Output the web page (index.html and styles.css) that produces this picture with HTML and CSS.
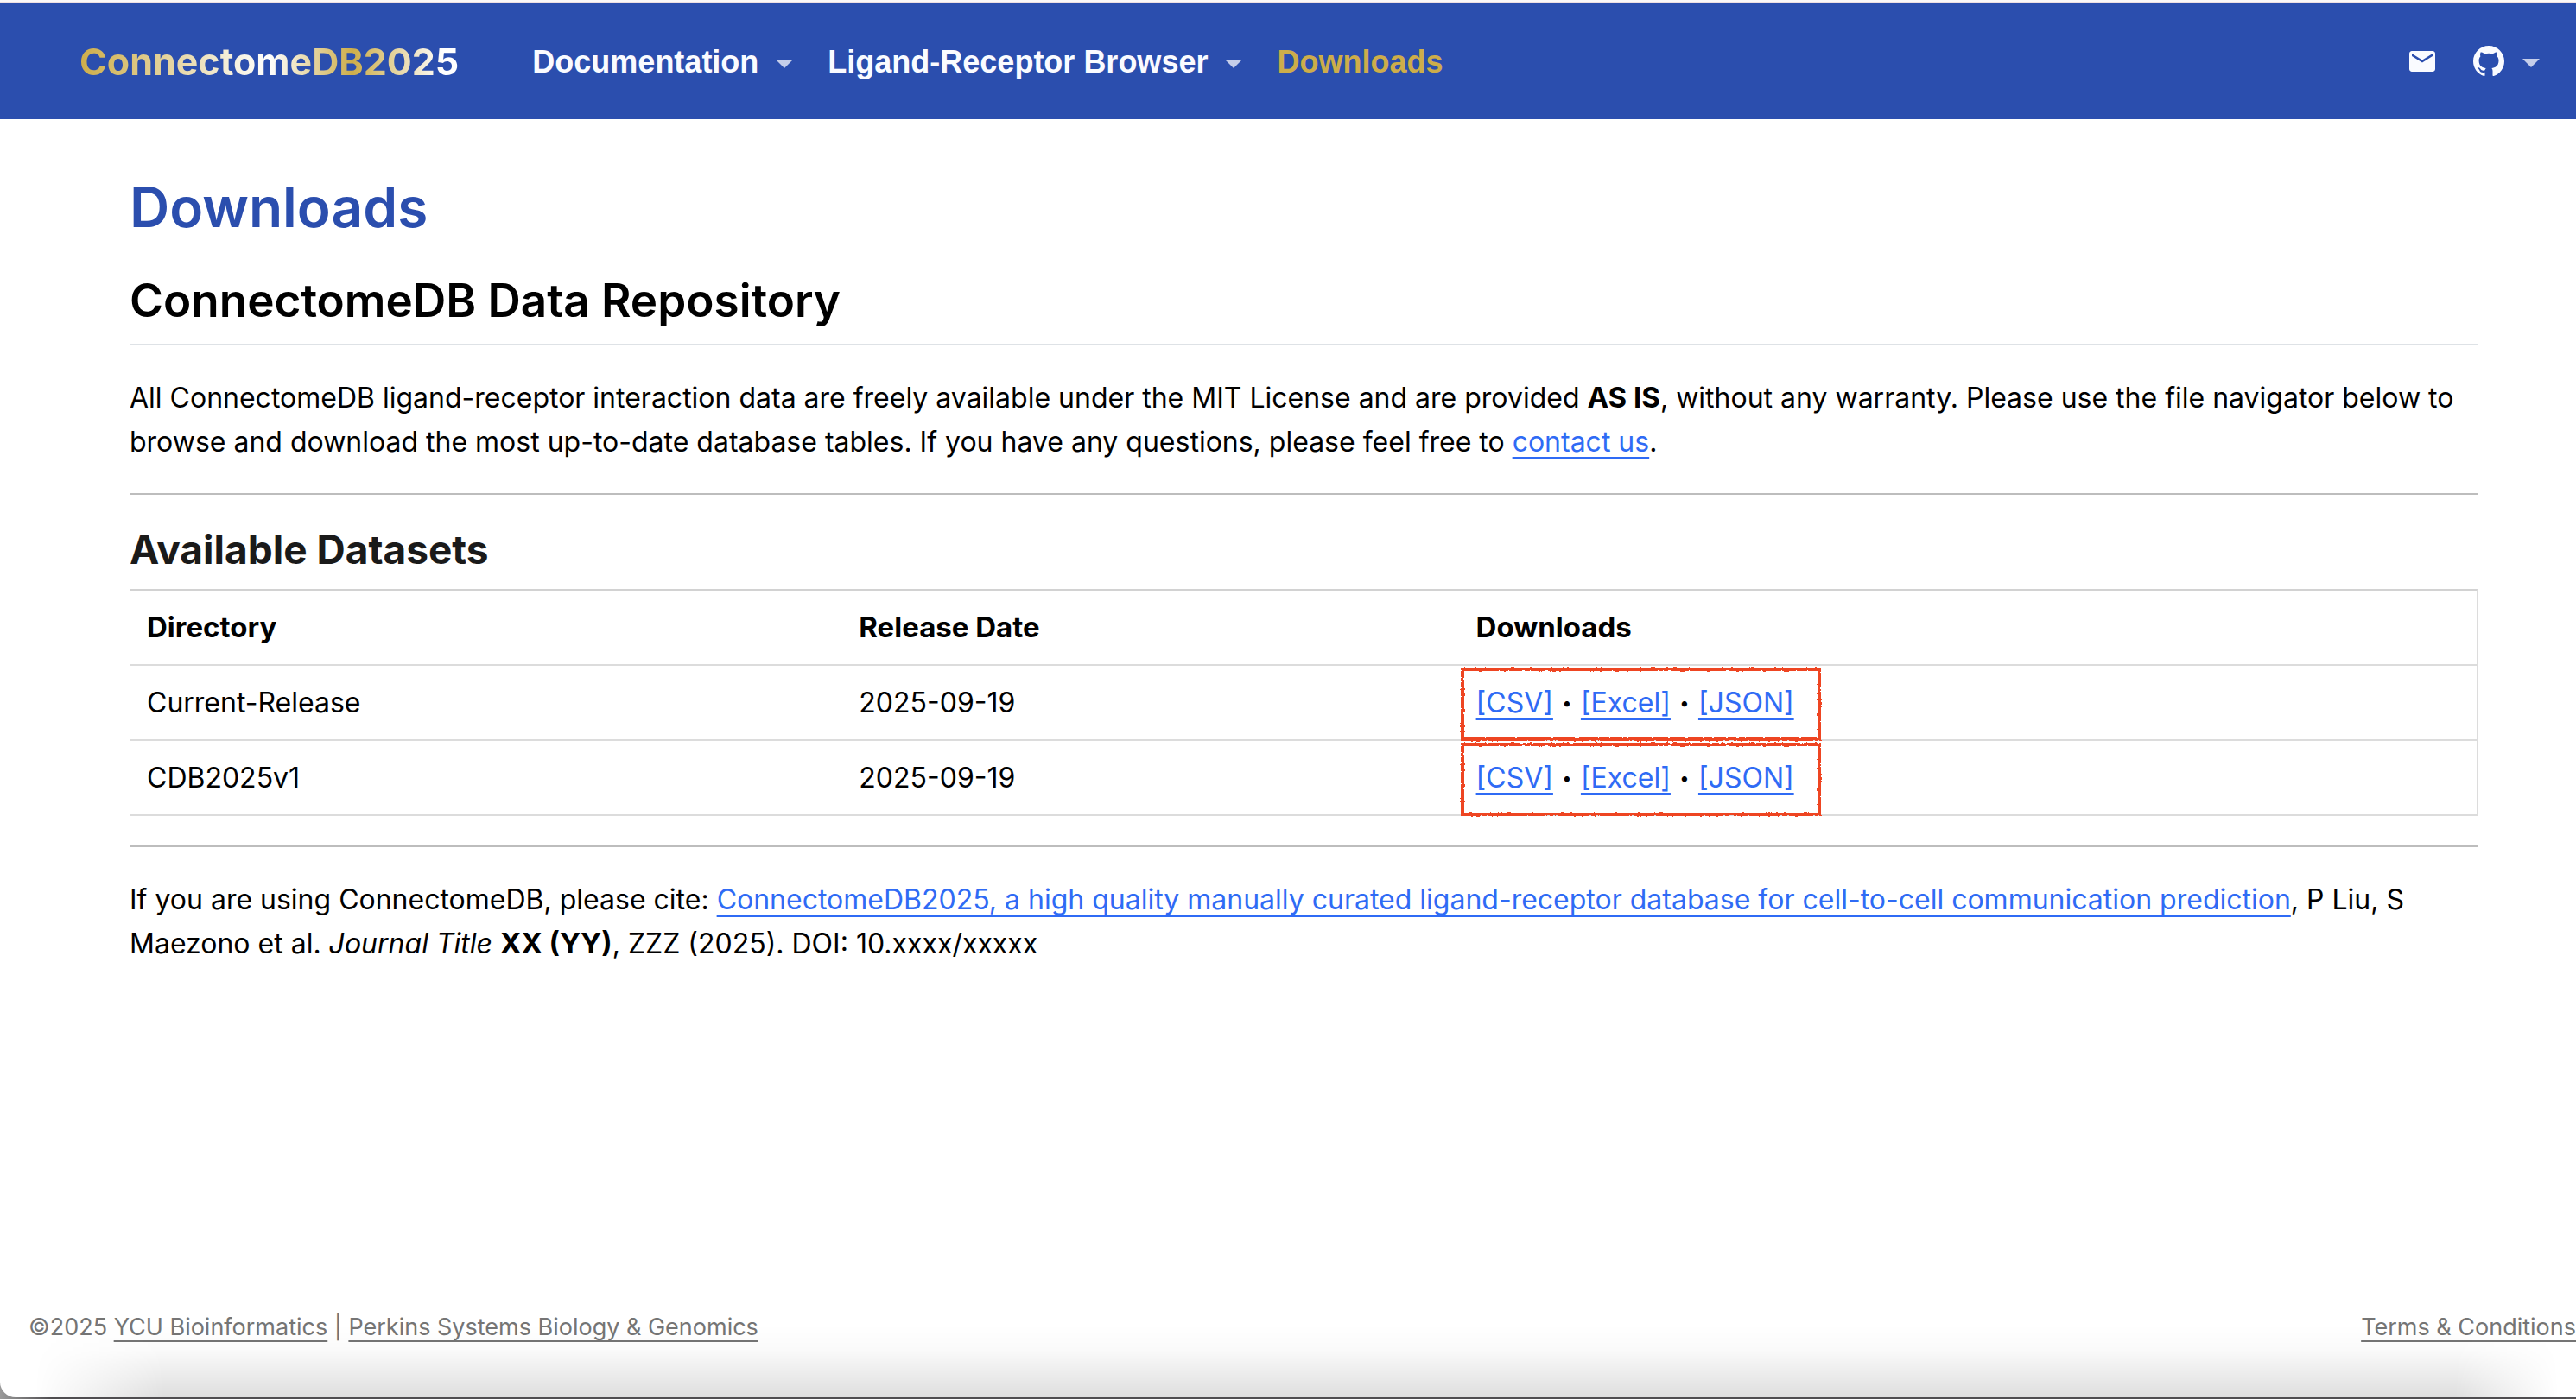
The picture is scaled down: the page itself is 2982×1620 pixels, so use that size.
FILE: index.html
```html
<!DOCTYPE html>
<html lang="en">
<head>
<meta charset="utf-8">
<meta name="viewport" content="width=device-width, initial-scale=1">
<title>Downloads - ConnectomeDB2025</title>
<link rel="stylesheet" href="styles.css">
</head>
<body>
<svg class="defs" width="0" height="0" aria-hidden="true">
  <filter id="crayon" x="-2%" y="-8%" width="104%" height="116%">
    <feTurbulence type="fractalNoise" baseFrequency="0.25" numOctaves="2" seed="4" result="noise"/>
    <feDisplacementMap in="SourceGraphic" in2="noise" scale="3" xChannelSelector="R" yChannelSelector="G"/>
  </filter>
</svg>
<div class="page">
  <header class="navbar">
    <a class="brand" href="#">ConnectomeDB2025</a>
    <nav class="menu">
      <button class="menu-item" type="button">Documentation<span class="caret"></span></button>
      <button class="menu-item" type="button">Ligand-Receptor Browser<span class="caret"></span></button>
      <a class="menu-item active" href="#">Downloads</a>
    </nav>
    <div class="tools">
      <a class="tool" href="#" aria-label="Email">
        <svg class="mail" viewBox="2 4 20 16"><path d="M20 4H4c-1.1 0-1.99.9-1.99 2L2 18c0 1.1.9 2 2 2h16c1.1 0 2-.9 2-2V6c0-1.100-.9-2-2-2zm0 4l-8 5-8-5V6l8 5 8-5v2z"/></svg>
      </a>
      <button class="tool" type="button" aria-label="GitHub">
        <svg class="github" viewBox="0 0 16 16"><path d="M8 0C3.58 0 0 3.58 0 8c0 3.540 2.290 6.530 5.470 7.590.4.070.55-.17.55-.38 0-.19-.01-.82-.01-1.490-2.010.37-2.530-.49-2.690-.94-.09-.23-.48-.94-.82-1.130-.28-.15-.68-.52-.01-.53.63-.01 1.080.58 1.230.82.72 1.210 1.870.87 2.330.66.07-.52.28-.87.51-1.070-1.780-.2-3.640-.89-3.640-3.950 0-.87.31-1.590.82-2.150-.08-.2-.36-1.020.08-2.120 0 0 .67-.21 2.200.82.64-.18 1.320-.27 2-.27s1.360.09 2 .27c1.530-1.040 2.200-.82 2.200-.82.44 1.100.16 1.920.08 2.120.51.56.82 1.270.82 2.150 0 3.070-1.870 3.750-3.650 3.950.29.25.54.73.54 1.480 0 1.070-.01 1.930-.01 2.200 0 .21.15.46.55.38A8.010 8.010 0 0 0 16 8c0-4.420-3.580-8-8-8z"/></svg>
        <span class="caret"></span>
      </button>
    </div>
  </header>

  <main class="content">
    <h1>Downloads</h1>
    <h2>ConnectomeDB Data Repository</h2>
    <p>All ConnectomeDB ligand-receptor interaction data are freely available under the MIT License and are provided <strong>AS IS</strong>, without any warranty. Please use the file navigator below to browse and download the most up-to-date database tables. If you have any questions, please feel free to <a href="#">contact us</a>.</p>
    <hr>
    <h3>Available Datasets</h3>
    <table class="datasets">
      <thead>
        <tr><th class="col-dir" scope="col">Directory</th><th class="col-date" scope="col">Release Date</th><th scope="col">Downloads</th></tr>
      </thead>
      <tbody>
        <tr>
          <td>Current-Release</td><td>2025-09-19</td>
          <td class="files"><a href="#">[CSV]</a><span class="dot">•</span><a href="#">[Excel]</a><span class="dot">•</span><a href="#">[JSON]</a><svg class="mark" viewBox="0 0 418 86" aria-hidden="true"><rect x="3" y="3" width="413" height="81"/></svg></td>
        </tr>
        <tr>
          <td>CDB2025v1</td><td>2025-09-19</td>
          <td class="files"><a href="#">[CSV]</a><span class="dot">•</span><a href="#">[Excel]</a><span class="dot">•</span><a href="#">[JSON]</a><svg class="mark" viewBox="0 0 418 86" aria-hidden="true"><rect x="3" y="3" width="413" height="81"/></svg></td>
        </tr>
      </tbody>
    </table>
    <hr>
    <p>If you are using ConnectomeDB, please cite: <a href="#">ConnectomeDB2025, a high quality manually curated ligand-receptor database for cell-to-cell communication prediction</a>, P Liu, S Maezono et al. <em>Journal Title</em> <strong>XX (YY)</strong>, ZZZ (2025). DOI: 10.xxxx/xxxxx</p>
  </main>

  <footer class="footer">
    <div>©2025 <a href="#">YCU Bioinformatics</a> | <a href="#">Perkins Systems Biology &amp; Genomics</a></div>
    <a href="#">Terms &amp; Conditions</a>
  </footer>
</div>
</body>
</html>
```
FILE: styles.css
```css
* {
  box-sizing: border-box;
}

body {
  margin: 0;
  background: linear-gradient(90deg, #9a9a9a, #4f4d50 60px);
  color: #000;
  font-family: Inter, "Liberation Sans", sans-serif;
  font-size: 32px;
  line-height: 51px;
}

.defs {
  position: absolute;
}

.page {
  display: flex;
  flex-direction: column;
  min-height: calc(100vh - 2px);
  margin-bottom: 2px;
  position: relative;
  overflow: hidden;
  border-top: 2px solid #fbf8f8;
  border-bottom-left-radius: 18px;
  background: #fff;
}

/* soft shade along the window's lower edge */
.page::after {
  content: "";
  position: absolute;
  inset: auto 0 0 0;
  height: 84px;
  background: linear-gradient(transparent, rgba(0, 0, 0, 0.02) 35%, rgba(0, 0, 0, 0.13));
  mask-image: linear-gradient(90deg, transparent 40px, #000 190px, #000 calc(100% - 140px), transparent calc(100% - 20px));
  pointer-events: none;
}

/* Navigation */
.navbar {
  display: flex;
  align-items: center;
  height: 136px;
  padding: 0 42px 0 92px;
  border-top: 2px solid #eedfe2;
  background: #2b4eae;
}

.brand {
  margin-right: 85px;
  background: linear-gradient(90deg, #cdad4a, #fff 50%, #cdad4a 72%, #fff 96%);
  background-clip: text;
  color: transparent;
  font-size: 43px;
  font-weight: 700;
  text-decoration: none;
}

.menu {
  display: flex;
  gap: 40px;
  padding-top: 2px;
}

.menu-item,
.tool {
  display: flex;
  align-items: center;
  padding: 0;
  border: 0;
  background: none;
  color: #fafbff;
}

.menu-item {
  gap: 20px;
  font: bold 36px/54px "Liberation Sans", Arial, sans-serif;
  text-decoration: none;
}

.active {
  color: #cdad4a;
}

.caret {
  margin-top: 3px;
  border: 10px solid transparent;
  border-top-color: #c5ceea;
  border-bottom: 0;
}

.tools {
  display: flex;
  gap: 44px;
  margin-left: auto;
}

.tool {
  gap: 21px;
}

.tool svg {
  display: block;
  fill: currentColor;
}

.mail {
  width: 30px;
  height: 24px;
}

.github {
  width: 36px;
  height: 36px;
}

/* Content */
.content {
  flex: 1;
  padding: 62px 114px 0 150px;
}

h1,
h2,
h3,
p {
  margin: 0;
}

h1 {
  color: #2b4eae;
  font-size: 64px;
  font-weight: 600;
  line-height: 80px;
}

h2 {
  margin: 35px 0;
  padding-bottom: 17px;
  border-bottom: 2px solid #dee2e6;
  font-size: 53px;
  font-weight: 600;
  line-height: 66px;
}

h3 {
  margin-bottom: 18px;
  color: #1a1a1a;
  font-size: 46px;
  font-weight: 700;
  line-height: 56px;
}

hr {
  height: 2px;
  margin: 34px 0 35px;
  border: 0;
  background: #bdbdbd;
}

strong {
  font-size: 33px;
  line-height: 1;
}

.content a {
  color: #2f6bf5;
  text-decoration: underline 3px;
  text-decoration-skip-ink: none;
  text-underline-offset: 6px;
}

.datasets {
  width: 100%;
  table-layout: fixed;
  border-collapse: separate;
  border-spacing: 0;
  border: 1px solid #dcdcdc;
  border-top: 2px solid #d2d2d2;
  border-bottom: 0;
}

.datasets th,
.datasets td {
  padding: 17px 19px;
  border-bottom: 2px solid #dcdcdc;
  text-align: left;
}

.datasets th {
  font-size: 33px;
}

.col-dir {
  width: 30.35%;
}

.col-date {
  width: 26.3%;
}

.files {
  position: relative;
}

.dot {
  display: inline-block;
  width: 32px;
  font-size: 20px;
  text-align: center;
  vertical-align: 4px;
  line-height: 1;
}

.mark {
  position: absolute;
  top: 1px;
  left: 0;
  width: 418px;
  height: 86px;
  fill: none;
  stroke: #ee4423;
  stroke-width: 4px;
  filter: url(#crayon);
  pointer-events: none;
}

/* Footer */
.footer {
  display: flex;
  justify-content: space-between;
  padding: 0 0 59px 33px;
  color: #757575;
  font-size: 27px;
  line-height: 44px;
  white-space: nowrap;
}

.footer a {
  color: inherit;
  text-decoration: underline 2px;
  text-decoration-skip-ink: none;
  text-underline-offset: 6px;
}
```
